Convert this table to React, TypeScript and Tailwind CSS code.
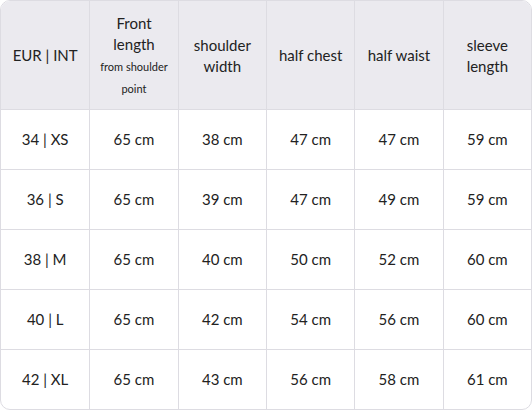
import React from 'react';

const headers: React.ReactNode[] = [
  'EUR | INT',
  <>
    Front
    <br />
    length
    <br />
    <span className="text-[11px]">from shoulder</span>
    <br />
    <span className="text-[11px]">point</span>
  </>,
  <>
    shoulder
    <br />
    width
  </>,
  'half chest',
  'half waist',
  <>
    sleeve
    <br />
    length
  </>,
];

const rows: string[][] = [
  ['34 | XS', '65 cm', '38 cm', '47 cm', '47 cm', '59 cm'],
  ['36 | S', '65 cm', '39 cm', '47 cm', '49 cm', '59 cm'],
  ['38 | M', '65 cm', '40 cm', '50 cm', '52 cm', '60 cm'],
  ['40 | L', '65 cm', '42 cm', '54 cm', '56 cm', '60 cm'],
  ['42 | XL', '65 cm', '43 cm', '56 cm', '58 cm', '61 cm'],
];

const App: React.FC = () => {
  return (
    <div className="w-[532px] h-[410px] bg-white font-['Lato','Liberation_Sans',sans-serif] text-[15px] text-[#222]">
      <div className="h-full rounded-[10px] border border-[#dddce2] overflow-hidden">
        {/* Header */}
        <div className="grid grid-cols-6 h-[108px] bg-[#ebeaef]">
          {headers.map((h, i) => (
            <div
              key={i}
              className={`flex items-center justify-center text-center leading-[21px] ${i > 0 ? 'border-l border-[#dddce2]' : ''}`}
            >
              <div className="pt-[1px]">{h}</div>
            </div>
          ))}
        </div>

        {/* Rows */}
        {rows.map((row, r) => (
          <div key={r} className="grid grid-cols-6 h-[60px] border-t border-[#dddce2]">
            {row.map((cell, i) => (
              <div
                key={i}
                className={`flex items-center justify-center ${i > 0 ? 'border-l border-[#dddce2]' : ''}`}
              >
                {cell}
              </div>
            ))}
          </div>
        ))}
      </div>
    </div>
  );
};

export default App;
